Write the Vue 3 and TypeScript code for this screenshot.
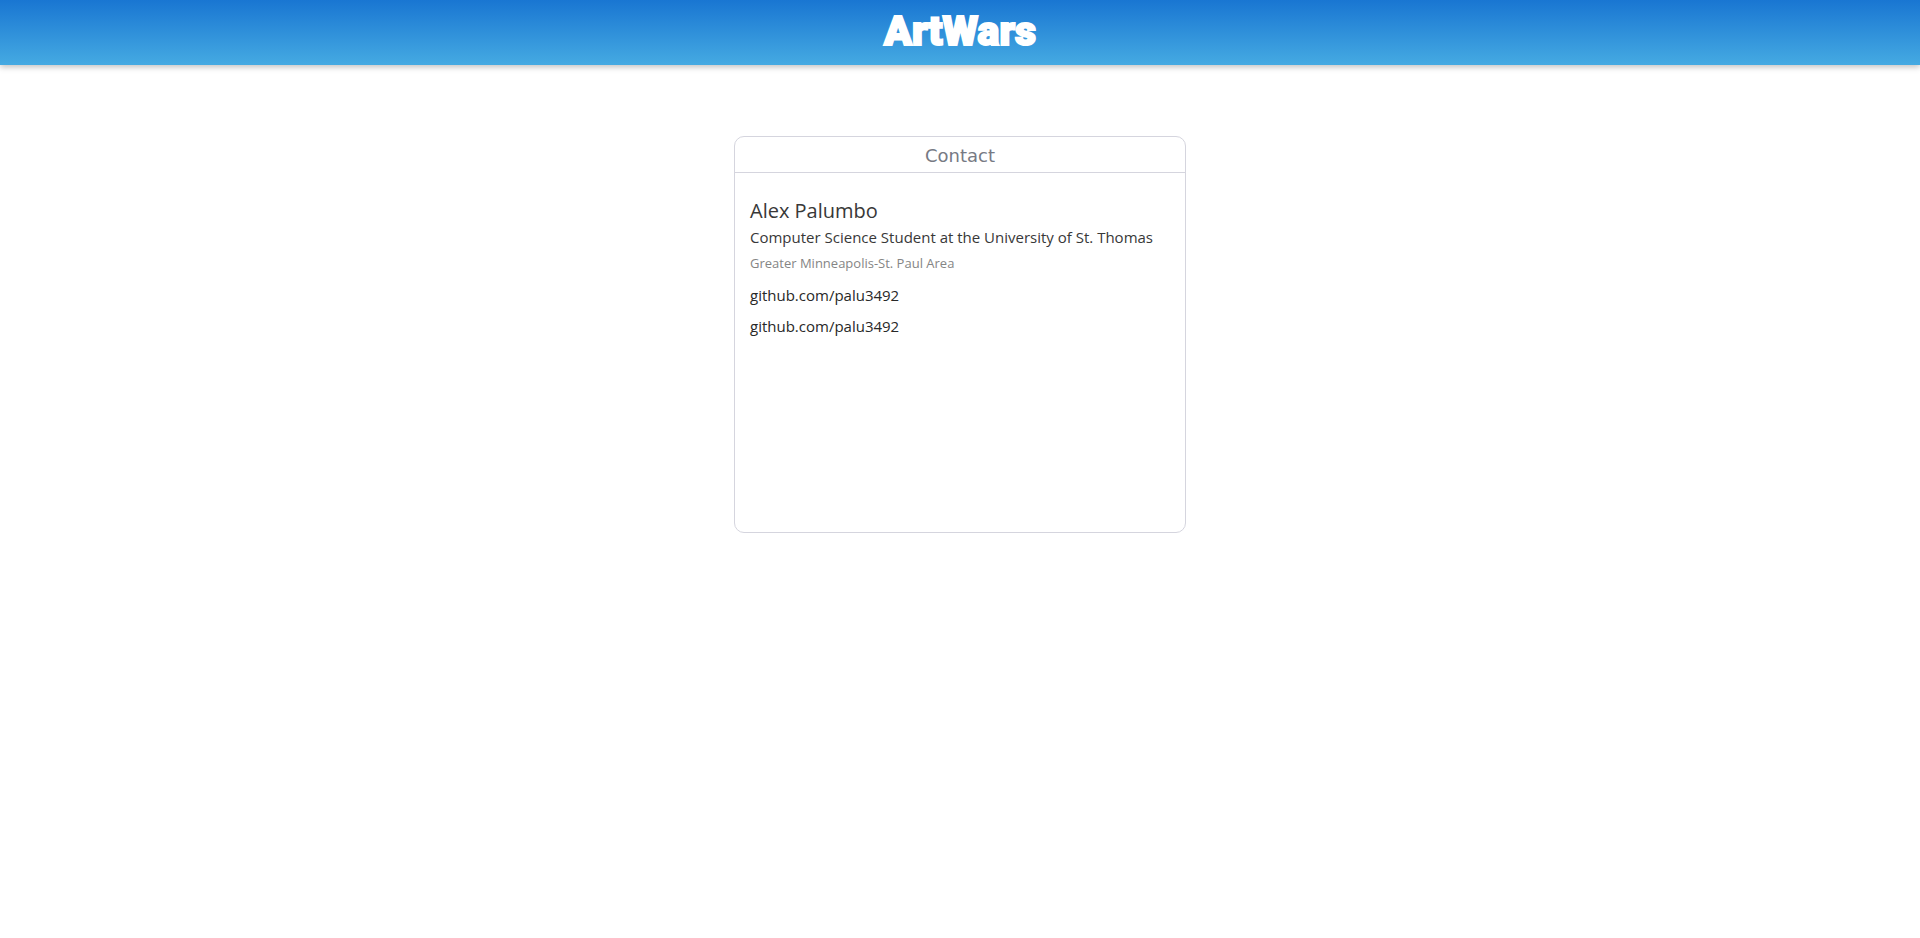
<script setup lang="ts">
interface Profile {
  name: string
  headline: string
  area: string
  links: string[]
}

const profile: Profile = {
  name: 'Alex Palumbo',
  headline: 'Computer Science Student at the University of St. Thomas',
  area: 'Greater Minneapolis-St. Paul Area',
  links: ['github.com/palu3492', 'github.com/palu3492'],
}
</script>

<template>
  <header class="topbar">
    <h1 class="logo">ArtWars</h1>
  </header>
  <main class="page">
    <section class="card" aria-labelledby="contact-title">
      <h2 id="contact-title" class="card-title">Contact</h2>
      <div class="card-body">
        <h3 class="name">{{ profile.name }}</h3>
        <p class="headline">{{ profile.headline }}</p>
        <p class="area">{{ profile.area }}</p>
        <ul class="links">
          <li v-for="(link, index) in profile.links" :key="index">
            <a class="link" :href="`https://${link}`">{{ link }}</a>
          </li>
        </ul>
      </div>
    </section>
  </main>
</template>

<style>
body {
  margin: 0;
  background: #fff;
}
</style>

<style scoped>
.topbar {
  display: flex;
  justify-content: center;
  box-sizing: border-box;
  height: 65px;
  padding-top: 3px;
  background: linear-gradient(#1976d2, #45aae2);
  box-shadow: 0 2px 6px rgba(0, 0, 0, 0.25);
}

.logo {
  margin: 0;
  font: 900 41px/56px Roboto, "Liberation Sans", sans-serif;
  color: #fff;
  -webkit-text-stroke: 2px #fff;
}

.page {
  display: flex;
  justify-content: center;
  padding: 71px 16px 32px;
}

.card {
  box-sizing: border-box;
  width: 100%;
  max-width: 452px;
  min-height: 397px;
  border: 1px solid #d5d5de;
  border-radius: 10px;
}

.card-title {
  margin: 0;
  padding-top: 3px;
  border-bottom: 1px solid #d5d5de;
  font: 400 18px/32px "DejaVu Sans", Verdana, sans-serif;
  text-align: center;
  color: #777a84;
}

.card-body {
  padding: 24px 15px;
  font-family: "Segoe UI", "Open Sans", "Noto Sans", sans-serif;
  color: #383838;
}

.name {
  margin: 0;
  font-size: 20px;
  font-weight: 400;
  line-height: 27px;
}

.headline {
  margin: 0;
  font-size: 15px;
  line-height: 26px;
}

.area {
  margin: 0;
  font-size: 13px;
  line-height: 26px;
  color: #858585;
}

.links {
  margin: 4px 0 0;
  padding: 0;
  list-style: none;
}

.link {
  display: inline-block;
  font-size: 15px;
  line-height: 31px;
  color: #282828;
  text-decoration: none;
}
</style>
